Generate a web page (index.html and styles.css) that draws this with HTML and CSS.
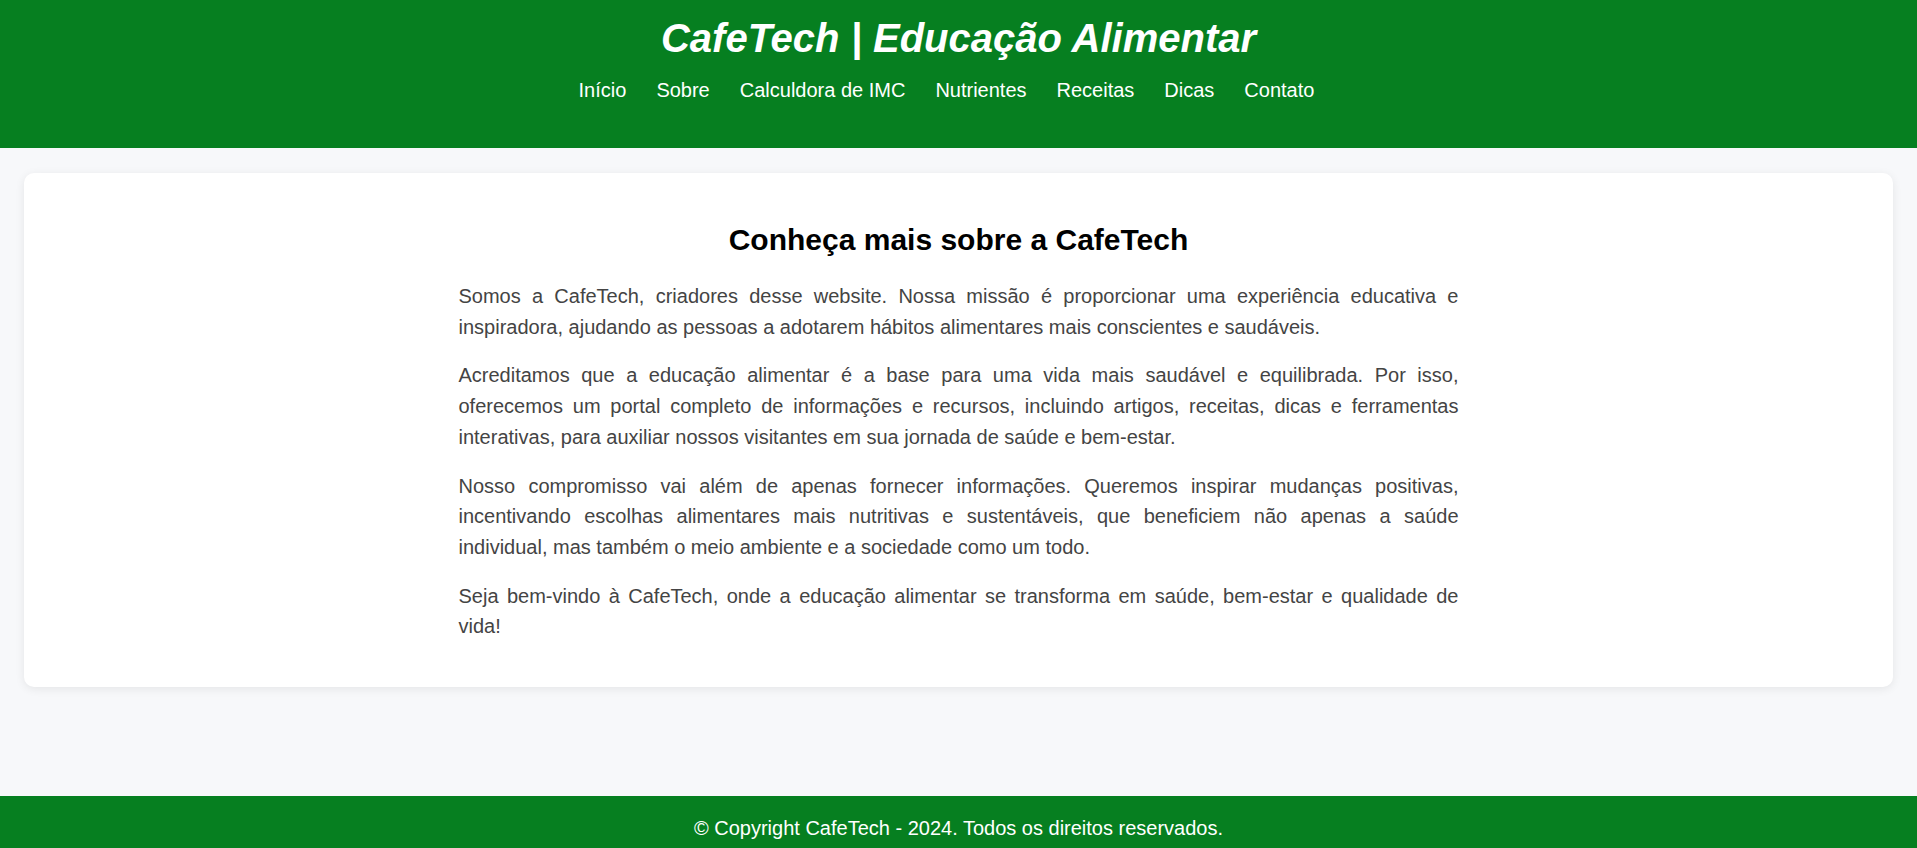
FILE: index.html
```html
<!DOCTYPE html>
<html lang="pt-BR">
<head>
<meta charset="utf-8">
<title>CafeTech | Educação Alimentar</title>
<link rel="stylesheet" href="styles.css">
</head>
<body>
<header class="site-header">
  <h1 class="site-title">CafeTech | Educação Alimentar</h1>
  <nav class="site-nav">
    <ul class="nav-list">
      <li><a href="#">Início</a></li>
      <li><a href="#">Sobre</a></li>
      <li><a href="#">Calculdora de IMC</a></li>
      <li><a href="#">Nutrientes</a></li>
      <li><a href="#">Receitas</a></li>
      <li><a href="#">Dicas</a></li>
      <li><a href="#">Contato</a></li>
    </ul>
  </nav>
</header>
<main class="main">
  <section class="card">
    <div class="card-content">
      <h2 class="card-title">Conheça mais sobre a CafeTech</h2>
      <p>Somos a CafeTech, criadores desse website. Nossa missão é proporcionar uma experiência educativa e inspiradora, ajudando as pessoas a adotarem hábitos alimentares mais conscientes e saudáveis.</p>
      <p>Acreditamos que a educação alimentar é a base para uma vida mais saudável e equilibrada. Por isso, oferecemos um portal completo de informações e recursos, incluindo artigos, receitas, dicas e ferramentas interativas, para auxiliar nossos visitantes em sua jornada de saúde e bem-estar.</p>
      <p>Nosso compromisso vai além de apenas fornecer informações. Queremos inspirar mudanças positivas, incentivando escolhas alimentares mais nutritivas e sustentáveis, que beneficiem não apenas a saúde individual, mas também o meio ambiente e a sociedade como um todo.</p>
      <p>Seja bem-vindo à CafeTech, onde a educação alimentar se transforma em saúde, bem-estar e qualidade de vida!</p>
    </div>
  </section>
</main>
<footer class="site-footer">
  <p>© Copyright CafeTech - 2024. Todos os direitos reservados.</p>
</footer>
</body>
</html>
```
FILE: styles.css
```css
* { box-sizing: border-box; }

body {
  margin: 0;
  background: #f7f8fa;
  font-family: "Liberation Sans", Arial, sans-serif;
  color: #333;
}

.site-header {
  background: #067f20;
  color: #fff;
  text-align: center;
  padding: 15px 0 0;
  height: 148px;
}

.site-title {
  margin: 0;
  font-size: 40px;
  font-weight: bold;
  font-style: italic;
  line-height: 46px;
}

.site-nav {
  margin-top: 18px;
}

.nav-list {
  list-style: none;
  margin: 0;
  padding: 0 24px 0 0;
  display: flex;
  justify-content: center;
  gap: 30px;
}

.nav-list a {
  color: #fff;
  text-decoration: none;
  font-size: 20px;
  line-height: 22px;
}

.main {
  padding: 25px 24px 109px;
}

.card {
  background: #fff;
  border-radius: 10px;
  box-shadow: 0 2px 10px rgba(0, 0, 0, 0.08);
  padding: 50px 24px 45px;
}

.card-content {
  max-width: 1000px;
  margin: 0 auto;
}

.card-title {
  margin: 0 0 24px;
  text-align: center;
  font-size: 30px;
  line-height: 34px;
  font-weight: bold;
  color: #000;
}

.card-content p {
  margin: 0 0 18px;
  font-size: 20px;
  line-height: 30.7px;
  text-align: justify;
  color: #444;
}

.card-content p:last-child {
  margin-bottom: 0;
}

.site-footer {
  background: #067f20;
  color: #fff;
  text-align: center;
  padding: 20px 0;
}

.site-footer p {
  margin: 0;
  font-size: 20px;
  line-height: 24px;
}
```
